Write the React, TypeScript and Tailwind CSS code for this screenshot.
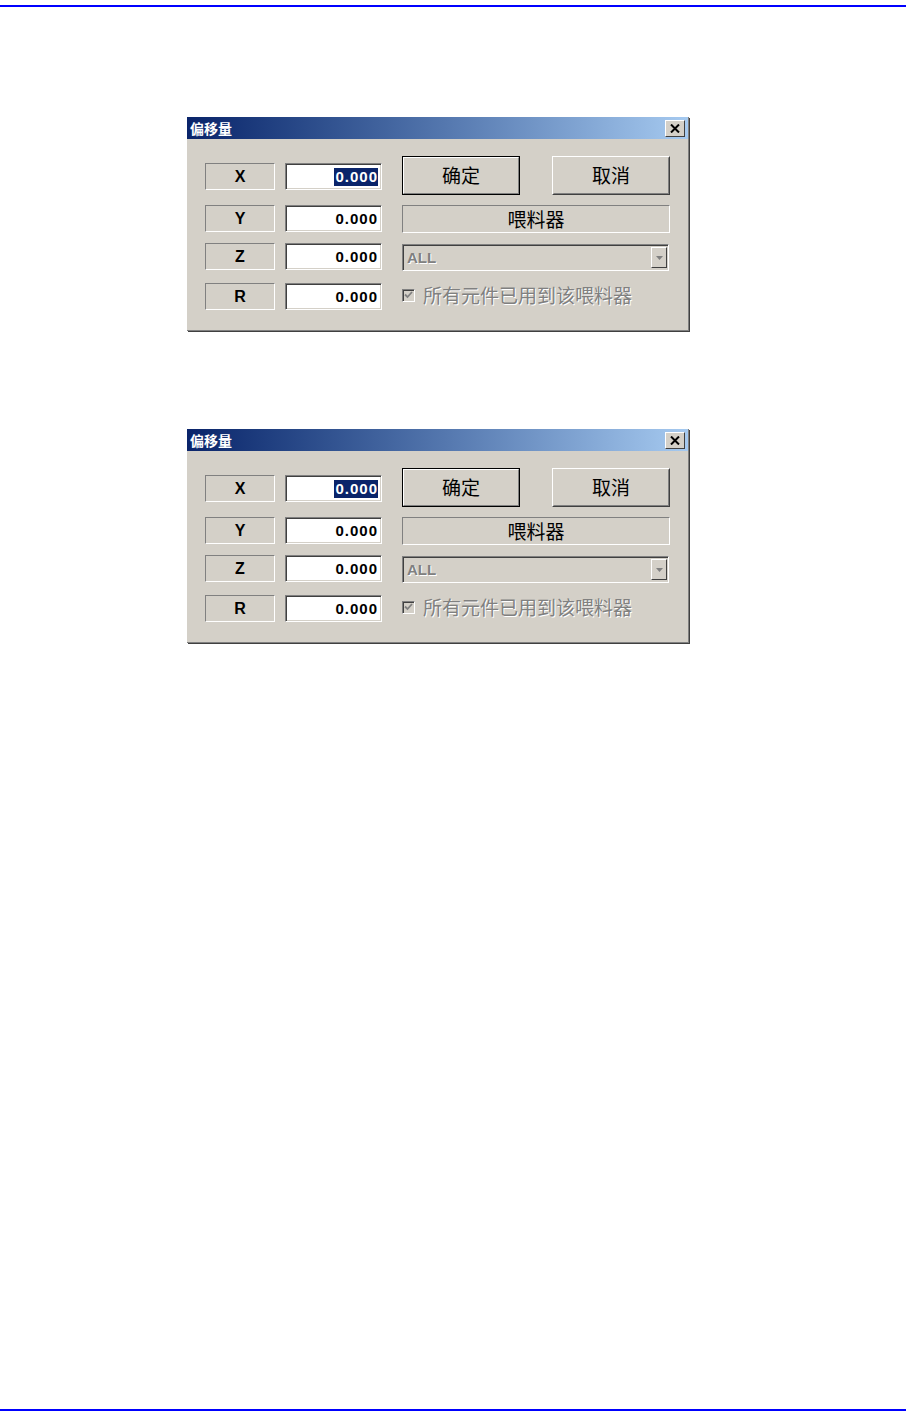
import React from "react";

const cjk = { fontFamily: '"Noto Sans CJK SC", "Noto Sans", sans-serif' };
const sans = { fontFamily: '"Liberation Sans", Arial, sans-serif' };

function AxisRow({ label, first, className }: { label: string; first?: boolean; className?: string }) {
  return (
    <div className={`flex h-[27px] items-stretch ${className ?? ""}`}>
      {/* label box, sunken static */}
      <div
        style={sans}
        className="flex w-[70px] items-center justify-center border border-t-[#808080] border-l-[#808080] border-b-white border-r-white text-[16px] font-bold text-black"
      >
        {label}
      </div>
      {/* edit box */}
      <div className="ml-[10px] flex w-[97px] items-center justify-end border border-t-[#808080] border-l-[#808080] border-b-white border-r-white bg-white pr-[3px] shadow-[inset_1px_1px_#404040,inset_-1px_-1px_#d4d0c8]">
        <span
          style={sans}
          className={`pl-[1px] text-[15px] leading-[18px] font-bold tracking-[1px] ${first ? "bg-[#0a246a] text-white" : "text-black"}`}
        >
          0.000
        </span>
      </div>
    </div>
  );
}

function Dialog({ className }: { className?: string }) {
  return (
    <div className={`flex h-[214px] w-[502px] flex-col bg-[#d4d0c8] border-r border-b border-r-[#808080] border-b-[#808080] shadow-[1px_1px_#404040] ${className ?? ""}`}>
      {/* title bar */}
      <div className="flex h-[22px] items-center justify-between bg-gradient-to-r from-[#0a246a] to-[#a6caf0] pl-[3px] pr-[3px]">
        <span style={cjk} className="text-[14px] font-bold leading-none text-white">偏移量</span>
        <div className="flex h-[17px] w-[20px] items-center justify-center border border-t-white border-l-white border-r-[#404040] border-b-[#404040] bg-[#d4d0c8]">
          <svg width="10" height="9" viewBox="0 0 10 9">
            <path d="M1 0.5 L9 8.5 M9 0.5 L1 8.5" stroke="#000" strokeWidth="2" />
          </svg>
        </div>
      </div>

      <div className="flex pl-[18px]">
        {/* left column */}
        <div className="mt-[24px] flex flex-col">
          <AxisRow label="X" first />
          <AxisRow label="Y" className="mt-[15px]" />
          <AxisRow label="Z" className="mt-[11px]" />
          <AxisRow label="R" className="mt-[13px]" />
        </div>

        {/* right column */}
        <div className="ml-[20px] mt-[17px] flex flex-col">
          <div className="flex h-[39px] gap-[32px]">
            <div className="flex w-[118px] border border-black">
              <div
                style={cjk}
                className="flex flex-1 items-center justify-center border border-t-white border-l-white border-r-[#808080] border-b-[#808080] text-[19px] text-black"
              >
                确定
              </div>
            </div>
            <div className="flex w-[118px] border border-t-white border-l-white border-r-[#404040] border-b-[#404040]">
              <div
                style={cjk}
                className="flex flex-1 items-center justify-center border border-t-[#d4d0c8] border-l-[#d4d0c8] border-r-[#808080] border-b-[#808080] text-[19px] text-black"
              >
                取消
              </div>
            </div>
          </div>

          <div
            style={cjk}
            className="mt-[10px] flex h-[28px] w-[268px] items-center justify-center border border-t-[#808080] border-l-[#808080] border-b-white border-r-white text-[19px] text-black"
          >
            喂料器
          </div>

          {/* combo box, disabled */}
          <div className="mt-[11px] flex h-[27px] w-[267px] border border-t-[#808080] border-l-[#808080] border-b-white border-r-white shadow-[inset_1px_1px_#404040]">
            <div className="flex flex-1 items-center pl-[4px] pt-[1px]">
              <span style={sans} className="text-[15px] font-bold text-[#808080] [text-shadow:1px_1px_#ffffff]">ALL</span>
            </div>
            <div className="my-[2px] mr-[1px] flex w-[16px] items-center justify-center border border-t-white border-l-white border-r-[#404040] border-b-[#404040] bg-[#d4d0c8]">
              <svg width="7" height="4" viewBox="0 0 7 4">
                <path d="M0 0 H7 L3.5 4 Z" fill="#808080" />
              </svg>
            </div>
          </div>

          {/* disabled checkbox */}
          <div className="mt-[13px] flex h-[22px] items-center">
            <div className="flex h-[13px] w-[13px] items-center justify-center border border-t-[#808080] border-l-[#808080] border-b-white border-r-white bg-[#d4d0c8] shadow-[inset_1px_1px_#404040]">
              <svg width="9" height="8" viewBox="0 0 9 8">
                <path d="M1 3.5 L3.5 6 L8 1" stroke="#808080" strokeWidth="1.8" fill="none" />
              </svg>
            </div>
            <span style={cjk} className="ml-[8px] text-[19px] text-[#808080] [text-shadow:1px_1px_#ffffff]">
              所有元件已用到该喂料器
            </span>
          </div>
        </div>
      </div>
    </div>
  );
}

export default function App() {
  return (
    <div className="flex h-[1421px] w-[908px] flex-col bg-white">
      <div className="mt-[5px] h-[2px] w-[906px] bg-[#0000ff]" />
      <Dialog className="ml-[187px] mt-[110px]" />
      <Dialog className="ml-[187px] mt-[98px]" />
      <div className="flex-1" />
      <div className="h-[2px] w-[906px] bg-[#0000ff]" />
      <div className="h-[10px]" />
    </div>
  );
}
